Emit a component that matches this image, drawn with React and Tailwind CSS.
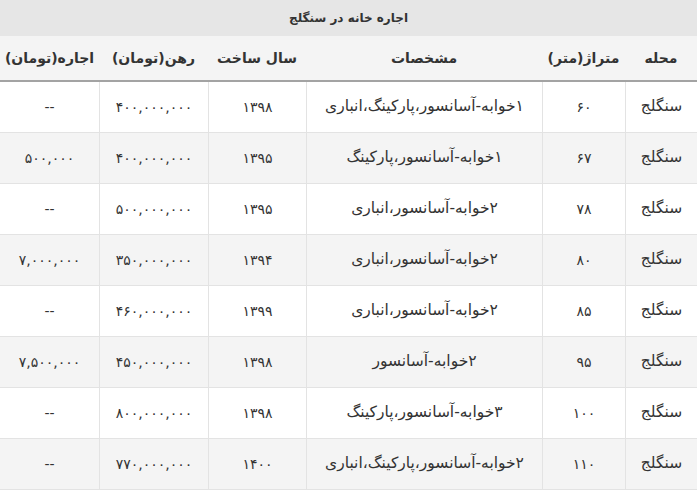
const cols = 'grid grid-cols-[72px_83px_236px_98px_109px_99px]';

const headers = ['محله', 'متراژ(متر)', 'مشخصات', 'سال ساخت', 'رهن(تومان)', 'اجاره(تومان)'];

const rows = [
  ['سنگلج', '۶۰', '۱خوابه-آسانسور،پارکینگ،انباری', '۱۳۹۸', '۴۰۰,۰۰۰,۰۰۰', '--'],
  ['سنگلج', '۶۷', '۱خوابه-آسانسور،پارکینگ', '۱۳۹۵', '۴۰۰,۰۰۰,۰۰۰', '۵۰۰,۰۰۰'],
  ['سنگلج', '۷۸', '۲خوابه-آسانسور،انباری', '۱۳۹۵', '۵۰۰,۰۰۰,۰۰۰', '--'],
  ['سنگلج', '۸۰', '۲خوابه-آسانسور،انباری', '۱۳۹۴', '۳۵۰,۰۰۰,۰۰۰', '۷,۰۰۰,۰۰۰'],
  ['سنگلج', '۸۵', '۲خوابه-آسانسور،انباری', '۱۳۹۹', '۴۶۰,۰۰۰,۰۰۰', '--'],
  ['سنگلج', '۹۵', '۲خوابه-آسانسور', '۱۳۹۸', '۴۵۰,۰۰۰,۰۰۰', '۷,۵۰۰,۰۰۰'],
  ['سنگلج', '۱۰۰', '۳خوابه-آسانسور،پارکینگ', '۱۳۹۸', '۸۰۰,۰۰۰,۰۰۰', '--'],
  ['سنگلج', '۱۱۰', '۲خوابه-آسانسور،پارکینگ،انباری', '۱۴۰۰', '۷۷۰,۰۰۰,۰۰۰', '--'],
];

export default function App() {
  return (
    <div
      dir="rtl"
      className="w-[697px] h-[492px] bg-white text-[#333] overflow-hidden"
      style={{ fontFamily: '"DejaVu Sans", "Noto Sans", sans-serif' }}
    >
      {/* Title */}
      <div className="h-9 bg-[#e6e6e6] flex items-center justify-center text-[12px] font-bold text-[#333]">
        اجاره خانه در سنگلج
      </div>

      {/* Header */}
      <div className={`${cols} h-[46px] bg-[#f4f4f4] border-b-2 border-[#a3a3a3]`}>
        {headers.map((h, i) => (
          <div key={i} className="flex items-center justify-center text-[14px] font-bold">
            {h}
          </div>
        ))}
      </div>

      {/* Rows */}
      {rows.map((r, ri) => (
        <div
          key={ri}
          className={`${cols} h-[51px] border-b border-[#e3e3e3] ${ri % 2 ? 'bg-[#f4f4f4]' : 'bg-white'}`}
        >
          {r.map((c, ci) => (
            <div
              key={ci}
              className={`flex items-center justify-center ${ci === 0 || ci === 2 ? 'text-[15.5px]' : 'text-[14px]'} ${ci < 5 ? 'border-l border-[#e3e3e3]' : ''}`}
            >
              {c}
            </div>
          ))}
        </div>
      ))}
    </div>
  );
}
